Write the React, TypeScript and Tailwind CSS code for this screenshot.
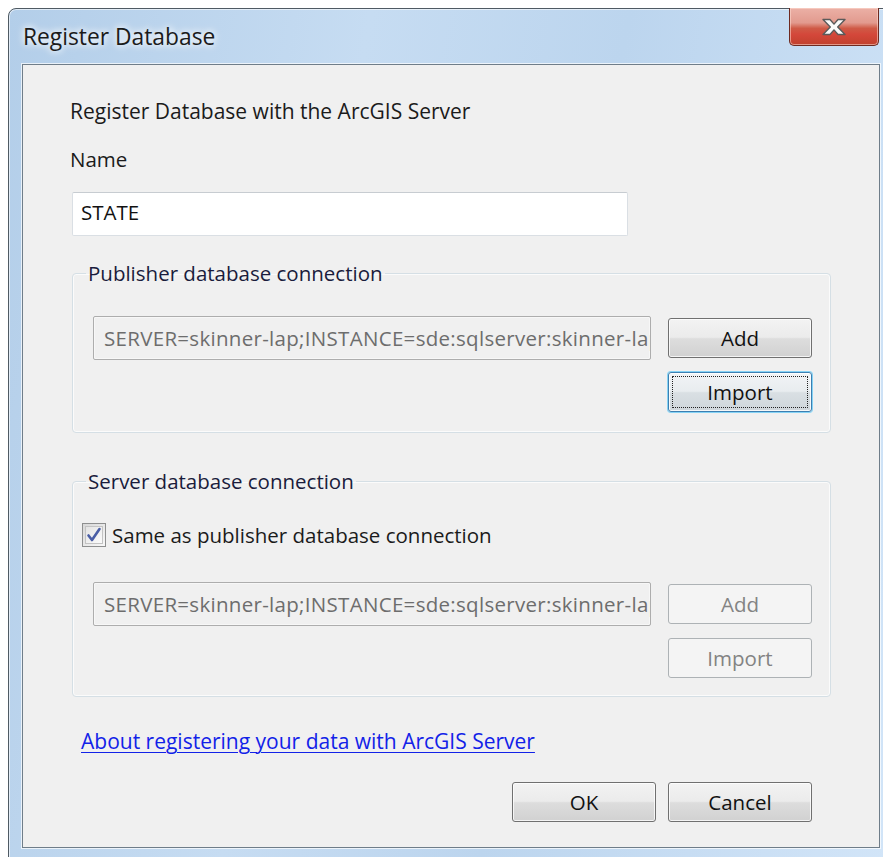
import React from 'react';

const btnBase =
  'relative flex h-[40px] w-[144px] items-center justify-center rounded-[3px] border text-[20.5px] leading-none';
const btnNormal =
  'border-[#707070] text-[#111] bg-[linear-gradient(to_bottom,#f3f3f3_0%,#ebebeb_48%,#dddddd_52%,#d1d1d1_100%)] shadow-[inset_0_0_0_1px_rgba(255,255,255,0.75)]';
const btnDisabled = 'border-[#adb2b5] bg-[#f4f4f4] text-[#838383]';

function Button({
  label,
  disabled,
  focused,
  className = '',
}: {
  label: string;
  disabled?: boolean;
  focused?: boolean;
  className?: string;
}) {
  if (focused) {
    return (
      <button
        className={`${btnBase} border-[#3c7fb1] text-[#111] bg-[linear-gradient(to_bottom,#f1f4f6_0%,#e8ecef_48%,#d9dfe3_52%,#cfd6db_100%)] shadow-[0_0_0_1px_#86d3f5,inset_0_0_0_1px_rgba(255,255,255,0.8)] ${className}`}
      >
        <span className="absolute inset-[3px] rounded-[1px] border border-dotted border-[#222]" />
        <span className="relative">{label}</span>
      </button>
    );
  }
  return (
    <button className={`${btnBase} ${disabled ? btnDisabled : btnNormal} ${className}`}>
      {label}
    </button>
  );
}

function ConnField() {
  return (
    <div className="flex h-[44px] w-[558px] items-center overflow-hidden whitespace-nowrap rounded-[2px] border border-[#adadad] bg-[#f0f0f0] pl-[10px] tracking-[0.3px] text-[#6d6d6d] shadow-[inset_0_0_0_1px_#f7f7f7]">
      SERVER=skinner-lap;INSTANCE=sde:sqlserver:skinner-lap
    </div>
  );
}

function Group({
  title,
  children,
  className = '',
}: {
  title: string;
  children: React.ReactNode;
  className?: string;
}) {
  return (
    <fieldset
      className={`w-[759px] rounded-[4px] border border-[#d5dfe5] shadow-[inset_0_0_0_1px_#fbfbfb] ${className}`}
    >
      <legend className="ml-[13px] px-[2px] leading-[24px] text-[#1a1c3c]">{title}</legend>
      {children}
    </fieldset>
  );
}

function CloseButton() {
  return (
    <div className="-mt-[1px] flex h-[38px] w-[90px] items-center justify-center rounded-b-[5px] border border-t-0 border-[#6e2a20] bg-[linear-gradient(to_bottom,#ebb0a6_0%,#e29a8e_40%,#cf5a46_55%,#d4473a_72%,#c0412d_100%)] shadow-[inset_0_0_0_1px_rgba(255,220,210,0.55)]">
      <svg width="28" height="20" viewBox="0 0 28 20">
        <path
          d="M3 2.5h7l4 4.6 4-4.6h7l-7.3 7.5 7.3 7.5h-7l-4-4.6-4 4.6h-7l7.3-7.5z"
          fill="#fafafa"
          stroke="#5a5a5a"
          strokeWidth="1.4"
          strokeLinejoin="round"
        />
      </svg>
    </div>
  );
}

function CheckBox() {
  return (
    <div className="flex h-[24px] w-[24px] items-center justify-center border border-[#8e8f8f] bg-[linear-gradient(135deg,#d8d8d8,#f8f8f8)]">
      <div className="flex h-[18px] w-[18px] items-center justify-center border border-[#c3c3c3] bg-[linear-gradient(135deg,#e4e4e4,#fbfbfb)]">
        <svg width="16" height="16" viewBox="0 0 16 16">
          <path
            d="M2.5 8.5l3.5 4.5 7.5-11"
            fill="none"
            stroke="#4a5ea6"
            strokeWidth="2.6"
            strokeLinecap="round"
            strokeLinejoin="round"
          />
        </svg>
      </div>
    </div>
  );
}

export default function App() {
  return (
    <div className="h-[857px] w-[883px] overflow-hidden bg-white font-['Open_Sans',sans-serif]">
      {/* window frame */}
      <div className="ml-[8px] mt-[8px] h-[856px] w-[887px] rounded-tl-[8px] rounded-tr-[8px] border border-[#4f5a63] bg-[linear-gradient(100deg,#b3cee9_0%,#c6dcf2_35%,#bcd5ee_60%,#d2e5f8_100%)] px-[13px] shadow-[inset_0_0_0_1px_rgba(255,255,255,0.6)]">
        {/* title bar */}
        <div className="flex h-[55px] items-start justify-between">
          <div className="ml-[1px] mt-[13px] text-[22.8px] leading-[30px] text-[#1b1b1b] [text-shadow:0_0_10px_#ffffff,0_0_6px_#ffffff]">
            Register Database
          </div>
          <div className="mr-[2px]">
            <CloseButton />
          </div>
        </div>

        {/* client area */}
        <div className="flex h-[784px] w-[858px] flex-col border border-[#6f7d89] bg-[#f0f0f0] pl-[47px] pt-[34px] text-[20.5px] leading-[24px] text-[#1b1b1b] shadow-[0_0_0_1px_rgba(255,255,255,0.7)]">
          <div className="text-[21px]">Register Database with the ArcGIS Server</div>
          <div className="mt-[24px]">Name</div>
          <div className="ml-[2px] mt-[21px] flex h-[44px] w-[556px] items-center rounded-[2px] border border-[#dadfe4] border-t-[#c7ccd1] bg-white pb-[4px] pl-[8px] text-[#111]">
            STATE
          </div>

          <Group title="Publisher database connection" className="ml-[2px] mt-[25px]">
            <div className="flex gap-[17px] pl-[20px] pt-[31px] pb-[20px]">
              <ConnField />
              <div className="flex flex-col pt-[2px]">
                <Button label="Add" />
                <Button label="Import" focused className="mt-[14px]" />
              </div>
            </div>
          </Group>

          <Group title="Server database connection" className="ml-[2px] mt-[36px]">
            <div className="flex flex-col pt-[30px] pb-[18px]">
              <div className="ml-[9px] flex items-center gap-[6px]">
                <CheckBox />
                <span>Same as publisher database connection</span>
              </div>
              <div className="mt-[35px] flex gap-[17px] pl-[20px]">
                <ConnField />
                <div className="flex flex-col pt-[2px]">
                  <Button label="Add" disabled />
                  <Button label="Import" disabled className="mt-[14px]" />
                </div>
              </div>
            </div>
          </Group>

          <a className="ml-[11px] mt-[32px] self-start text-[21px] text-[#1222e8] underline decoration-1 underline-offset-[3px]">
            About registering your data with ArcGIS Server
          </a>

          <div className="mt-[29px] flex w-[742px] justify-end gap-[12px]">
            <Button label="OK" />
            <Button label="Cancel" />
          </div>
        </div>
      </div>
    </div>
  );
}
